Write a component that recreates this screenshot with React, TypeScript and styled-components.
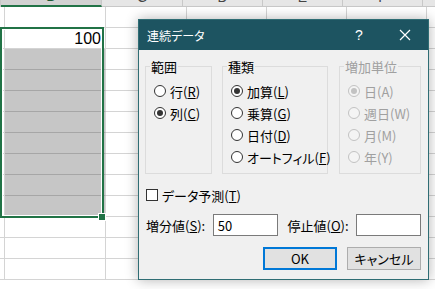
import * as React from 'react';
import styled, { createGlobalStyle } from 'styled-components';

const GlobalStyle = createGlobalStyle`
    html, body {
        margin: 0;
        padding: 0;
        background: #ffffff;
        overflow: hidden;
    }
    body {
        font-family: 'Noto Sans CJK JP', 'Noto Sans', sans-serif;
        font-feature-settings: 'palt';
    }
`;

const columns = [
    { key: 'A', width: 1 },
    { key: 'B', width: 101 },
    { key: 'C', width: 81 },
    { key: 'D', width: 80 },
    { key: 'E', width: 80 },
    { key: 'F', width: 80 },
    { key: 'G', width: 40 },
];
const ROWS = 13;

const Sheet = styled.div`
    position: relative;
    width: 435px;
    height: 289px;
    overflow: hidden;
    background: #ffffff;
`;

const HeaderRow = styled.div`
    display: flex;
    height: 7px;
`;

const HeaderCell = styled.div<{ $w: number; $sel?: boolean }>`
    flex: 0 0 ${(p) => p.$w}px;
    box-sizing: border-box;
    height: 7px;
    overflow: hidden;
    display: flex;
    align-items: flex-end;
    justify-content: center;
    background: ${(p) => (p.$sel ? '#d2d2d2' : '#e6e6e6')};
    border-right: 1px solid #c8c8c8;
    border-bottom: ${(p) => (p.$sel ? '2px solid #217346' : '1px solid #c8c8c8')};
    font-family: 'Liberation Sans', sans-serif;
    font-size: 14px;
    color: ${(p) => (p.$sel ? '#1e5a36' : '#444444')};
    span {
        line-height: 1;
        margin-bottom: 2px;
    }
`;

const Row = styled.div`
    display: flex;
    height: 21px;
`;

const Cell = styled.div<{ $w: number; $sel?: boolean }>`
    flex: 0 0 ${(p) => p.$w}px;
    box-sizing: border-box;
    height: 21px;
    border-right: 1px solid #d4d4d4;
    border-bottom: 1px solid ${(p) => (p.$sel ? '#a6a6a6' : '#d4d4d4')};
    background: ${(p) => (p.$sel ? '#c6c6c6' : '#ffffff')};
    font-family: 'Liberation Sans', sans-serif;
    font-size: 16px;
    text-align: right;
    padding-right: 4px;
    line-height: 21px;
    color: #000;
`;

const Selection = styled.div`
    position: absolute;
    left: 0;
    top: 27px;
    width: 104px;
    height: 191px;
    box-sizing: border-box;
    border: 2px solid #217346;
    box-shadow: inset 0 0 0 1px #ffffff;
    pointer-events: none;
`;

const FillHandle = styled.div`
    position: absolute;
    left: 99px;
    top: 214px;
    width: 6px;
    height: 6px;
    background: #217346;
    box-shadow: 0 0 0 1px #ffffff;
`;

const Dialog = styled.div`
    position: absolute;
    left: 138px;
    top: 19px;
    width: 291px;
    height: 261px;
    box-sizing: border-box;
    border: 1px solid #2f6d74;
    background: #f0f0f0;
    box-shadow: 0 0 12px rgba(0, 0, 0, 0.3);
    display: flex;
    flex-direction: column;
    color: #000;
    font-size: 13px;
`;

const TitleBar = styled.div`
    height: 30px;
    flex: 0 0 30px;
    background: #1d5461;
    color: #ffffff;
    display: flex;
    align-items: center;
    padding: 0 0 0 8px;
    font-size: 12px;
`;

const Title = styled.div`
    flex: 1;
`;

const Help = styled.div`
    width: 46px;
    text-align: center;
    font-size: 14px;
    font-family: 'Liberation Sans', sans-serif;
`;

const Close = styled.div`
    width: 46px;
    display: flex;
    justify-content: center;
`;

const Body = styled.div`
    padding: 10px 7px 0 6px;
    display: flex;
    flex-direction: column;
`;

const Groups = styled.div`
    display: flex;
    gap: 10px;
`;

const Group = styled.fieldset<{ $w: number; $disabled?: boolean }>`
    margin: 0 0 0 ${(p) => (p.$disabled ? 1 : 0)}px;
    width: ${(p) => p.$w}px;
    min-width: 0;
    flex: 0 0 ${(p) => p.$w}px;
    height: 114px;
    box-sizing: border-box;
    border: 1px solid #dcdcdc;
    padding: 7px 0 0 8px;
    display: flex;
    flex-direction: column;
    color: ${(p) => (p.$disabled ? '#a0a0a0' : '#000')};
    legend {
        padding: 0 1px;
        margin-left: -4px;
        line-height: 13px;
        font-size: 13px;
    }
`;

const Option = styled.div`
    display: flex;
    align-items: center;
    height: 22px;
    gap: 4px;
    white-space: nowrap;
    line-height: 1;
`;

const Radio = styled.span<{ $checked?: boolean; $disabled?: boolean }>`
    width: 12px;
    height: 12px;
    box-sizing: border-box;
    border-radius: 50%;
    border: 1px solid ${(p) => (p.$disabled ? '#c2c2c2' : '#333333')};
    background: ${(p) => (p.$disabled ? '#f4f4f4' : '#ffffff')};
    display: flex;
    align-items: center;
    justify-content: center;
    flex: 0 0 12px;
    &::after {
        content: '';
        width: 6px;
        height: 6px;
        border-radius: 50%;
        background: ${(p) => (p.$disabled ? '#c2c2c2' : '#333333')};
        display: ${(p) => (p.$checked ? 'block' : 'none')};
    }
`;

const CheckRow = styled(Option)`
    margin-top: 10px;
    padding-left: 1px;
`;

const Checkbox = styled.span`
    width: 12px;
    height: 12px;
    box-sizing: border-box;
    border: 1px solid #333333;
    background: #ffffff;
    flex: 0 0 12px;
`;

const FieldRow = styled.div`
    display: flex;
    align-items: center;
    margin-top: 8px;
    padding-left: 1px;
    height: 22px;
`;

const FieldLabel = styled.span<{ $w: number }>`
    width: ${(p) => p.$w}px;
    white-space: nowrap;
`;

const Input = styled.div`
    width: 65px;
    height: 22px;
    box-sizing: border-box;
    border: 1px solid #7a7a7a;
    background: #ffffff;
    padding-left: 4px;
    display: flex;
    align-items: center;
    font-size: 13px;
    & + span {
        margin-left: 10px;
    }
`;

const Buttons = styled.div`
    display: flex;
    justify-content: flex-end;
    gap: 10px;
    margin-top: 11px;
`;

const Button = styled.div<{ $primary?: boolean }>`
    width: 74px;
    height: 23px;
    box-sizing: border-box;
    border: ${(p) => (p.$primary ? '2px solid #0078d7' : '1px solid #adadad')};
    background: #e1e1e1;
    display: flex;
    align-items: center;
    justify-content: center;
    font-size: 13px;
`;

const App: React.FC = () => {
    return (
        <>
            <GlobalStyle />
            <Sheet>
                <HeaderRow>
                    {columns.map((c) => (
                        <HeaderCell key={c.key} $w={c.width} $sel={c.key === 'B'}>
                            {c.width > 10 && <span>{c.key}</span>}
                        </HeaderCell>
                    ))}
                </HeaderRow>
                {Array.from({ length: ROWS }).map((_, r) => (
                    <Row key={r}>
                        {columns.map((c) => (
                            <Cell key={c.key} $w={c.width} $sel={c.key === 'B' && r >= 2 && r <= 9}>
                                {c.key === 'B' && r === 1 ? '100' : ''}
                            </Cell>
                        ))}
                    </Row>
                ))}
                <Selection />
                <FillHandle />

                <Dialog>
                    <TitleBar>
                        <Title>連続データ</Title>
                        <Help>?</Help>
                        <Close>
                            <svg width="12" height="12" viewBox="0 0 12 12">
                                <path d="M1 1 L11 11 M11 1 L1 11" stroke="#ffffff" strokeWidth="1.2" />
                            </svg>
                        </Close>
                    </TitleBar>
                    <Body>
                        <Groups>
                            <Group $w={67}>
                                <legend>範囲</legend>
                                <Option>
                                    <Radio />
                                    <span>
                                        行(<u>R</u>)
                                    </span>
                                </Option>
                                <Option>
                                    <Radio $checked />
                                    <span>
                                        列(<u>C</u>)
                                    </span>
                                </Option>
                            </Group>
                            <Group $w={106}>
                                <legend>種類</legend>
                                <Option>
                                    <Radio $checked />
                                    <span>
                                        加算(<u>L</u>)
                                    </span>
                                </Option>
                                <Option>
                                    <Radio />
                                    <span>
                                        乗算(<u>G</u>)
                                    </span>
                                </Option>
                                <Option>
                                    <Radio />
                                    <span>
                                        日付(<u>D</u>)
                                    </span>
                                </Option>
                                <Option>
                                    <Radio />
                                    <span>
                                        オートフィル(<u>F</u>)
                                    </span>
                                </Option>
                            </Group>
                            <Group $w={82} $disabled>
                                <legend>増加単位</legend>
                                <Option>
                                    <Radio $checked $disabled />
                                    <span>日(A)</span>
                                </Option>
                                <Option>
                                    <Radio $disabled />
                                    <span>週日(W)</span>
                                </Option>
                                <Option>
                                    <Radio $disabled />
                                    <span>月(M)</span>
                                </Option>
                                <Option>
                                    <Radio $disabled />
                                    <span>年(Y)</span>
                                </Option>
                            </Group>
                        </Groups>
                        <CheckRow>
                            <Checkbox />
                            <span>
                                データ予測(<u>T</u>)
                            </span>
                        </CheckRow>
                        <FieldRow>
                            <FieldLabel $w={67}>
                                増分値(<u>S</u>):
                            </FieldLabel>
                            <Input>50</Input>
                            <FieldLabel $w={69}>
                                停止値(<u>O</u>):
                            </FieldLabel>
                            <Input />
                        </FieldRow>
                        <Buttons>
                            <Button $primary>OK</Button>
                            <Button>キャンセル</Button>
                        </Buttons>
                    </Body>
                </Dialog>
            </Sheet>
        </>
    );
};

export default App;
